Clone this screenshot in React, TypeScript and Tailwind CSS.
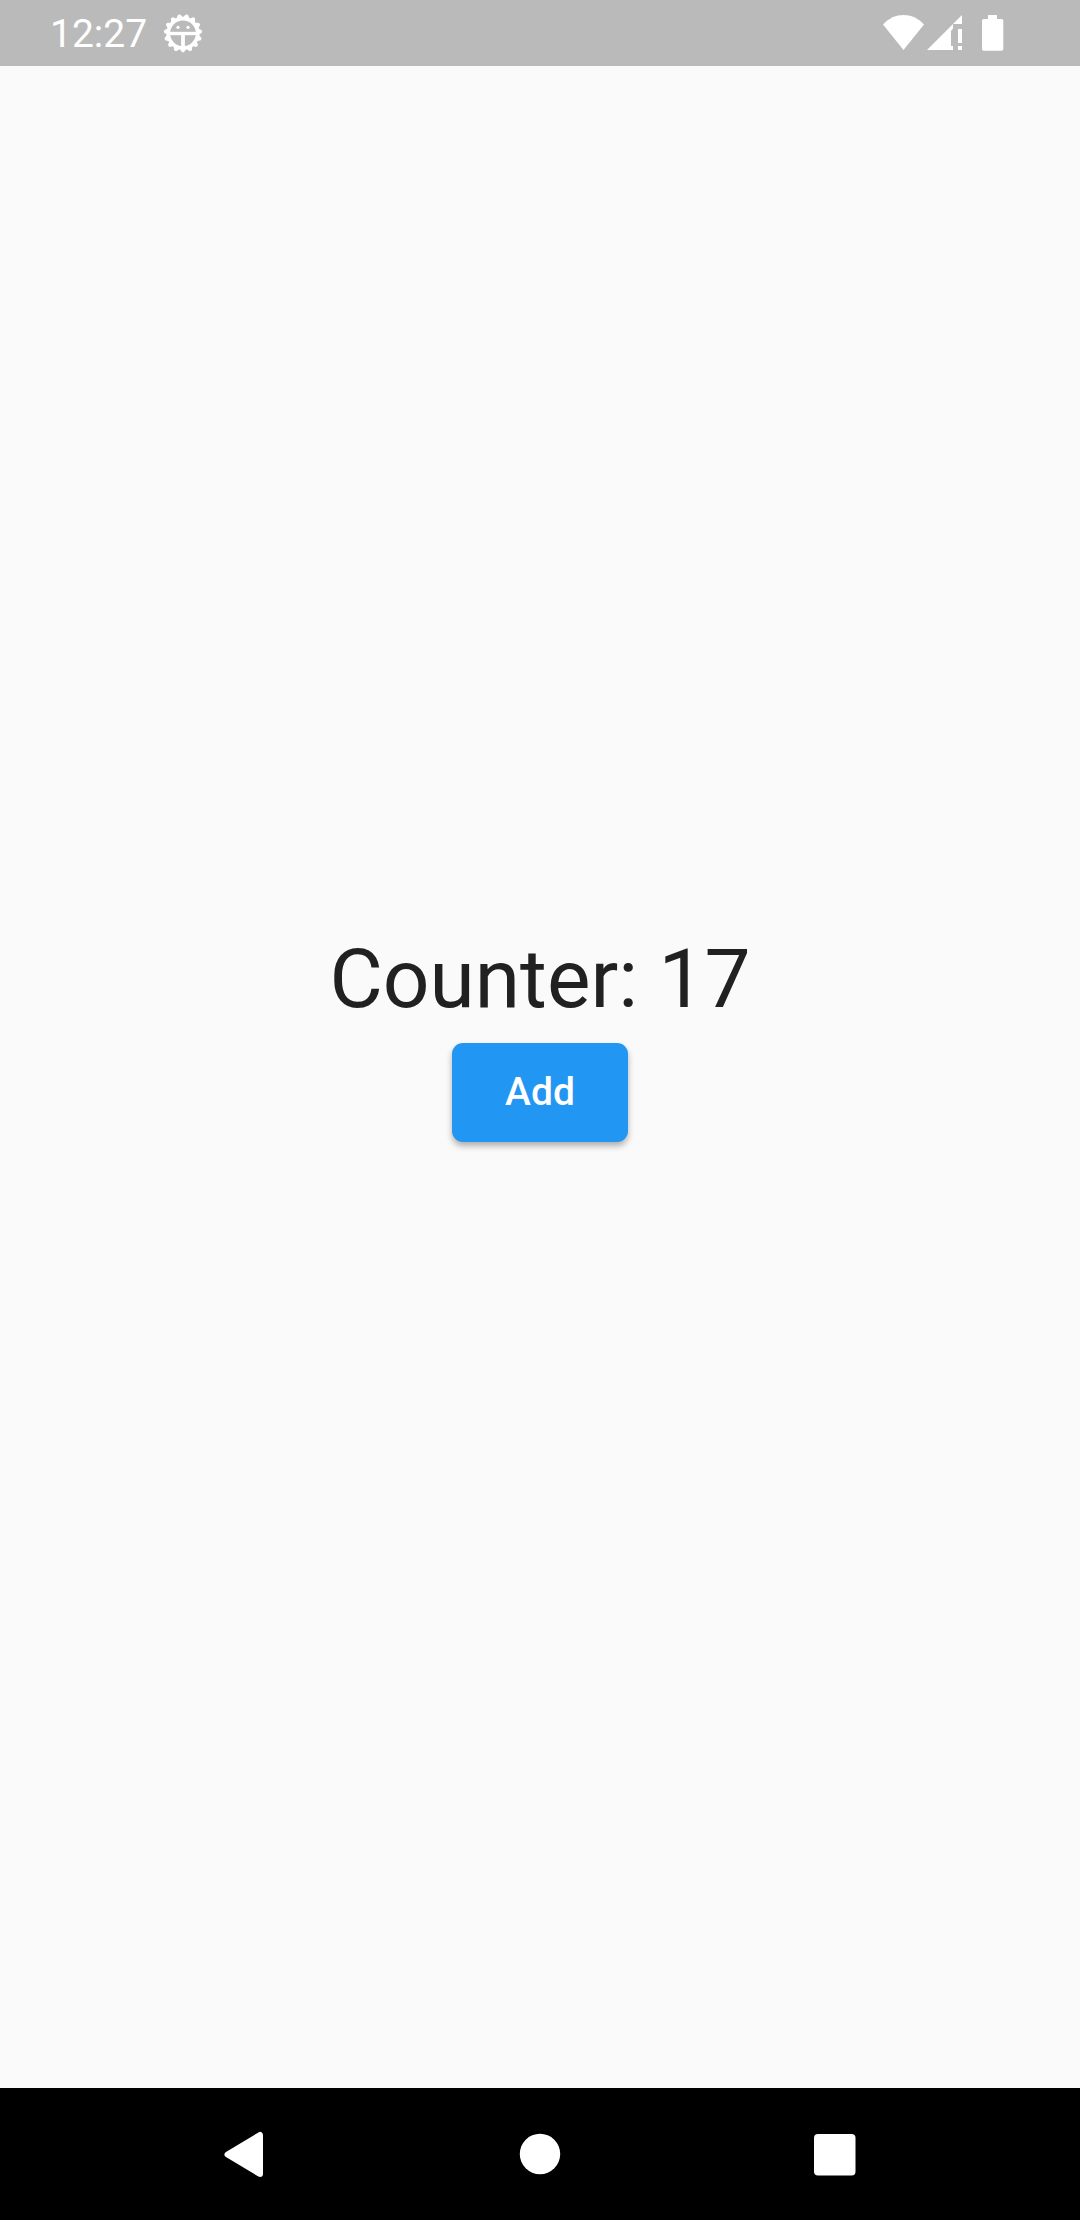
import { useState } from "react";
import type { ReactNode } from "react";

const teeth = Array.from({ length: 15 }, (_, i) => 90 + i * 24);

function GearIcon() {
  return (
    <svg width="40" height="40" viewBox="0 0 40 40" fill="none" stroke="currentColor" aria-hidden="true">
      <circle cx="20" cy="20.3" r="14.7" strokeWidth="3.6" />
      {teeth.map((angle) => (
        <path
          key={angle}
          d="M35 17 38 18.7A1.5 1.5 0 0 1 38 21.3L35 23Z"
          fill="currentColor"
          strokeWidth="1"
          transform={`translate(0 0.3) rotate(${angle} 20 20)`}
        />
      ))}
      <path d="M6 20.5H34" strokeWidth="3.4" />
      <path d="M20 20V34" strokeWidth="3.8" />
      <circle cx="15" cy="14.3" r="1.6" fill="currentColor" stroke="none" />
      <circle cx="25" cy="14.3" r="1.6" fill="currentColor" stroke="none" />
    </svg>
  );
}

function WifiIcon() {
  return (
    <svg width="42" height="36" viewBox="0 0 42 36" fill="currentColor" aria-hidden="true">
      <path d="M0 9.5C6 3 13 0 20.500 0S35 3 41 9.500L20.500 35Z" />
    </svg>
  );
}

function SignalIcon() {
  return (
    <svg width="36" height="36" viewBox="0 0 36 36" fill="currentColor" aria-hidden="true">
      <path d="M0 35 26 9V13.500L24 16V31H26V35Z" />
      <path d="M35 0V9H26Z" />
      <path d="M31 14H35V28H31ZM31 31H35V35H31Z" />
    </svg>
  );
}

function BatteryIcon() {
  return (
    <svg width="22" height="36" viewBox="0 0 22 36" fill="currentColor" aria-hidden="true">
      <path d="M6 0H15V4H19.5A1.8 1.8 0 0 1 21.3 5.8V34A1.8 1.8 0 0 1 19.5 35.8H1.8A1.8 1.8 0 0 1 0 34V5.8A1.8 1.8 0 0 1 1.8 4H6Z" />
    </svg>
  );
}

function NavButton({ label, children }: { label: string; children: ReactNode }) {
  return (
    <button type="button" aria-label={label} className="flex flex-1 items-center justify-center">
      <svg width="48" height="48" viewBox="0 0 48 48" fill="currentColor" aria-hidden="true">
        {children}
      </svg>
    </button>
  );
}

export default function App() {
  const [count, setCount] = useState(17);

  return (
    <div className="flex min-h-screen flex-col bg-[#fafafa] font-[Roboto,sans-serif]">
      <header className="flex h-[66px] items-center justify-between bg-[#bababa] pr-[76px] pl-[50px] text-white">
        <div className="flex items-center gap-4">
          <time className="pt-0.5 text-[39px] leading-[46px]">12:27</time>
          <GearIcon />
        </div>
        <div className="flex items-center">
          <WifiIcon />
          <span className="ml-0.5">
            <SignalIcon />
          </span>
          <span className="ml-[19px]">
            <BatteryIcon />
          </span>
        </div>
      </header>

      <main className="flex flex-1 flex-col items-center justify-center gap-4 pb-[82px]">
        <p className="text-[82px] leading-[96px] text-[#212121]">Counter: {count}</p>
        <button
          type="button"
          onClick={() => setCount(count + 1)}
          className="h-[99px] min-w-[176px] rounded-[11px] bg-[#2196f3] px-11 text-[39px] font-medium text-white shadow-[0_4px_6px_rgba(0,0,0,0.3)]"
        >
          Add
        </button>
      </main>

      <nav className="flex h-[132px] bg-black px-24 text-white">
        <NavButton label="Back">
          <path
            d="M7.500 24.500 40 5V44Z"
            stroke="currentColor"
            strokeWidth="6"
            strokeLinejoin="round"
          />
        </NavButton>
        <NavButton label="Home">
          <circle cx="24" cy="24" r="20.2" />
        </NavButton>
        <NavButton label="Overview">
          <rect x="2" y="4" width="41.500" height="41.500" rx="4" />
        </NavButton>
      </nav>
    </div>
  );
}
